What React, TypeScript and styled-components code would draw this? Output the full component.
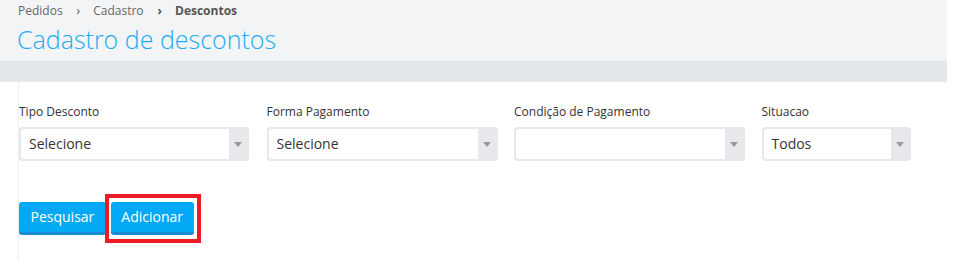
import styled, { createGlobalStyle } from "styled-components";

const GlobalStyle = createGlobalStyle`
  body {
    margin: 0;
    background: #fff;
    font-family: "Open Sans", "Liberation Sans", sans-serif;
    color: #333;
  }
`;

type FilterType = {
  label: string;
  value: string;
  width: number;
};

const filters: FilterType[] = [
  { label: "Tipo Desconto", value: "Selecione", width: 230 },
  { label: "Forma Pagamento", value: "Selecione", width: 231 },
  { label: "Condição de Pagamento", value: "", width: 231 },
  { label: "Situacao", value: "Todos", width: 149 },
];

export default function App() {
  return (
    <Page>
      <GlobalStyle />
      <Header>
        <Breadcrumb>
          <Crumb>Pedidos</Crumb>
          <Sep>›</Sep>
          <Crumb>Cadastro</Crumb>
          <Sep $bold>›</Sep>
          <Crumb $active>Descontos</Crumb>
        </Breadcrumb>
        <Title>Cadastro de descontos</Title>
      </Header>
      <Band />
      <Panel>
        <FilterRow>
          {filters.map(f => (
            <Field key={f.label}>
              <Label>{f.label}</Label>
              <Select $width={f.width}>
                <SelectValue>{f.value}</SelectValue>
                <ArrowBox>
                  <Arrow />
                </ArrowBox>
              </Select>
            </Field>
          ))}
        </FilterRow>
        <Actions>
          <Button $pad={11.5}>Pesquisar</Button>
          <Highlight>
            <Button $pad={10.5}>Adicionar</Button>
          </Highlight>
        </Actions>
      </Panel>
    </Page>
  );
}

const Page = styled.div`
  width: 958px;
  height: 279px;
  overflow: hidden;
`;

const Header = styled.div`
  width: 947px;
  height: 62px;
  box-sizing: border-box;
  background: #f3f4f6;
  border-bottom: 1px solid #dde1e5;
  padding: 2px 0 0 18px;
`;

const Breadcrumb = styled.div`
  display: flex;
  align-items: center;
  font-size: 12px;
  line-height: 18px;
  color: #555;
`;

const Crumb = styled.span<{ $active?: boolean }>`
  font-weight: ${props => (props.$active ? 700 : 400)};
  color: ${props => (props.$active ? "#555" : "#666")};
`;

const Sep = styled.span<{ $bold?: boolean }>`
  margin: 0 13px 0 14px;
  font-weight: ${props => (props.$bold ? 700 : 400)};
  color: #555;
`;

const Title = styled.h1`
  margin: 3px 0 0 -1px;
  font-size: 25px;
  line-height: 32px;
  font-weight: 300;
  color: #1faaf1;
`;

const Band = styled.div`
  width: 947px;
  height: 20px;
  background: #e5e8eb;
`;

const Panel = styled.div`
  margin-left: 18px;
  height: 157px;
  border-left: 1px solid #f0f0f0;
  padding-top: 21px;
`;

const FilterRow = styled.div`
  display: flex;
`;

const Field = styled.div`
  display: flex;
  flex-direction: column;
  flex-shrink: 0;
  width: 247.5px;
`;

const Label = styled.label`
  font-size: 12px;
  line-height: 17px;
  color: #333;
  margin-bottom: 7px;
`;

const Select = styled.div<{ $width: number }>`
  display: flex;
  width: ${props => props.$width}px;
  height: 34px;
  box-sizing: border-box;
  background: #e6e8eb;
  border-radius: 4px;
  padding: 2px;
`;

const SelectValue = styled.div`
  flex: 1;
  background: #fff;
  border-radius: 3px 0 0 3px;
  padding-left: 8px;
  font-size: 14px;
  line-height: 30px;
  color: #333;
`;

const ArrowBox = styled.div`
  width: 18px;
  display: flex;
  align-items: center;
  justify-content: center;
`;

const Arrow = styled.span`
  width: 0;
  height: 0;
  border-left: 4px solid transparent;
  border-right: 4px solid transparent;
  border-top: 5px solid #999;
`;

const Actions = styled.div`
  display: flex;
  align-items: center;
  margin-top: 33px;
`;

const Button = styled.button<{ $pad: number }>`
  height: 33px;
  box-sizing: border-box;
  padding: 0 ${props => props.$pad}px;
  border: none;
  border-bottom: 3px solid #1a8ad3;
  border-radius: 3px;
  background: #03a9f4;
  color: #fff;
  font-family: "Open Sans", "Liberation Sans", sans-serif;
  font-size: 14px;
  line-height: 30px;
`;

const Highlight = styled.div`
  display: flex;
  margin-left: -1px;
  border: 4px solid #ed1c24;
  padding: 4px 3px 4px 2px;
`;
